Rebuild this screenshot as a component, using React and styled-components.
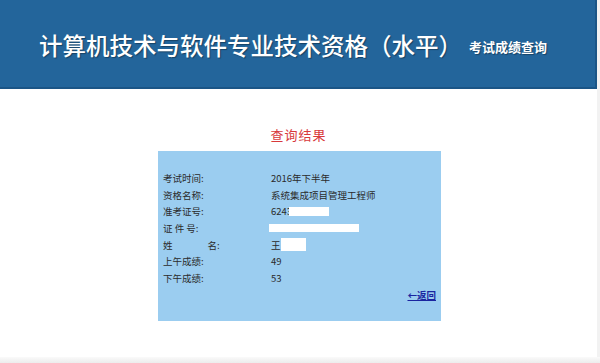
import React from "react";
import styled, { createGlobalStyle } from "styled-components";

const GlobalStyle = createGlobalStyle`
  html, body {
    margin: 0;
    padding: 0;
    background: #fff;
  }
  body {
    font-family: "Liberation Sans", "Noto Sans CJK SC", sans-serif;
  }
`;

const rows = [
    { label: "考试时间:", value: "2016年下半年" },
    { label: "资格名称:", value: "系统集成项目管理工程师" },
    { label: "准考证号:", value: "6243", mask: { w: 40, h: 9, ml: -3 } },
    { label: "证 件 号:", value: "", mask: { w: 90, h: 8, ml: -2 } },
    { label: "姓", label2: "名:", value: "王", mask: { w: 25, h: 13, ml: 0 } },
    { label: "上午成绩:", value: "49" },
    { label: "下午成绩:", value: "53" },
];

export default function App() {
    return (
        <Page>
            <GlobalStyle />
            <Header>
                <Title>计算机技术与软件专业技术资格（水平）</Title>
                <SubTitle>考试成绩查询</SubTitle>
            </Header>
            <Main>
                <ResultTitle>查询结果</ResultTitle>
                <ResultBox>
                    {rows.map((r) => (
                        <Row key={r.label}>
                            <Label>
                                {r.label}
                                {r.label2 && <LabelTail>{r.label2}</LabelTail>}
                            </Label>
                            <Value>
                                {r.value}
                                {r.mask && (
                                    <Mask $w={r.mask.w} $h={r.mask.h} $ml={r.mask.ml} />
                                )}
                            </Value>
                        </Row>
                    ))}
                    <BackRow>
                        <BackLink href="#">←返回</BackLink>
                    </BackRow>
                </ResultBox>
            </Main>
            <Footer />
        </Page>
    );
}

const Page = styled.div`
    width: 600px;
    height: 363px;
    display: flex;
    flex-direction: column;
    overflow: hidden;
    box-shadow: inset -3px 0 0 #f2f2f2;
`;

const Header = styled.header`
    height: 89px;
    box-sizing: border-box;
    margin-right: 3px;
    border-bottom: 2px solid #1b5586;
    border-right: 2px solid #1b5586;
    background: #23659b;
    display: flex;
    align-items: center;
    padding: 3px 0 0 39px;
`;

const Title = styled.h1`
    margin: 0;
    font-family: "Noto Sans CJK SC", sans-serif;
    font-size: 23.5px;
    font-weight: 500;
    color: #fff;
    text-shadow: 1px 1px 1px rgba(0, 0, 0, 0.35);
`;

const SubTitle = styled.span`
    margin-left: 7px;
    margin-top: 3px;
    font-family: "Noto Sans CJK SC", sans-serif;
    font-size: 13px;
    font-weight: 700;
    color: #fff;
    text-shadow: 1px 1px 1px rgba(0, 0, 0, 0.35);
`;

const Main = styled.main`
    flex: 1;
    display: flex;
    flex-direction: column;
    align-items: center;
    padding-top: 36px;
    padding-right: 3px;
`;

const ResultTitle = styled.h2`
    margin: 0 0 6px 0;
    font-family: "Noto Sans CJK SC", sans-serif;
    font-size: 13px;
    line-height: 20px;
    font-weight: 400;
    color: #d8393b;
    letter-spacing: 1px;
`;

const ResultBox = styled.section`
    width: 283px;
    height: 170px;
    box-sizing: border-box;
    margin-left: 2px;
    background: #9bcdf0;
    padding: 19px 5px 0 5px;
    display: flex;
    flex-direction: column;
`;

const Row = styled.div`
    display: flex;
    align-items: center;
    height: 16.6px;
    font-family: "Noto Sans CJK SC", sans-serif;
    font-size: 9.5px;
    color: #2a2a2a;
`;

const Label = styled.div`
    width: 108px;
    display: flex;
`;

const LabelTail = styled.span`
    margin-left: 35px;
`;

const Value = styled.div`
    display: flex;
    align-items: center;
`;

const Mask = styled.span`
    display: inline-block;
    width: ${(p) => p.$w}px;
    height: ${(p) => p.$h}px;
    margin-left: ${(p) => p.$ml}px;
    background: #fff;
`;

const BackRow = styled.div`
    display: flex;
    justify-content: flex-end;
    margin-top: 2px;
`;

const BackLink = styled.a`
    font-family: "Noto Sans CJK SC", sans-serif;
    font-size: 9.5px;
    font-weight: 700;
    color: #1a24a0;
    text-decoration: underline;
`;

const Footer = styled.div`
    height: 6px;
    background: linear-gradient(#fafafa, #ececec);
`;
